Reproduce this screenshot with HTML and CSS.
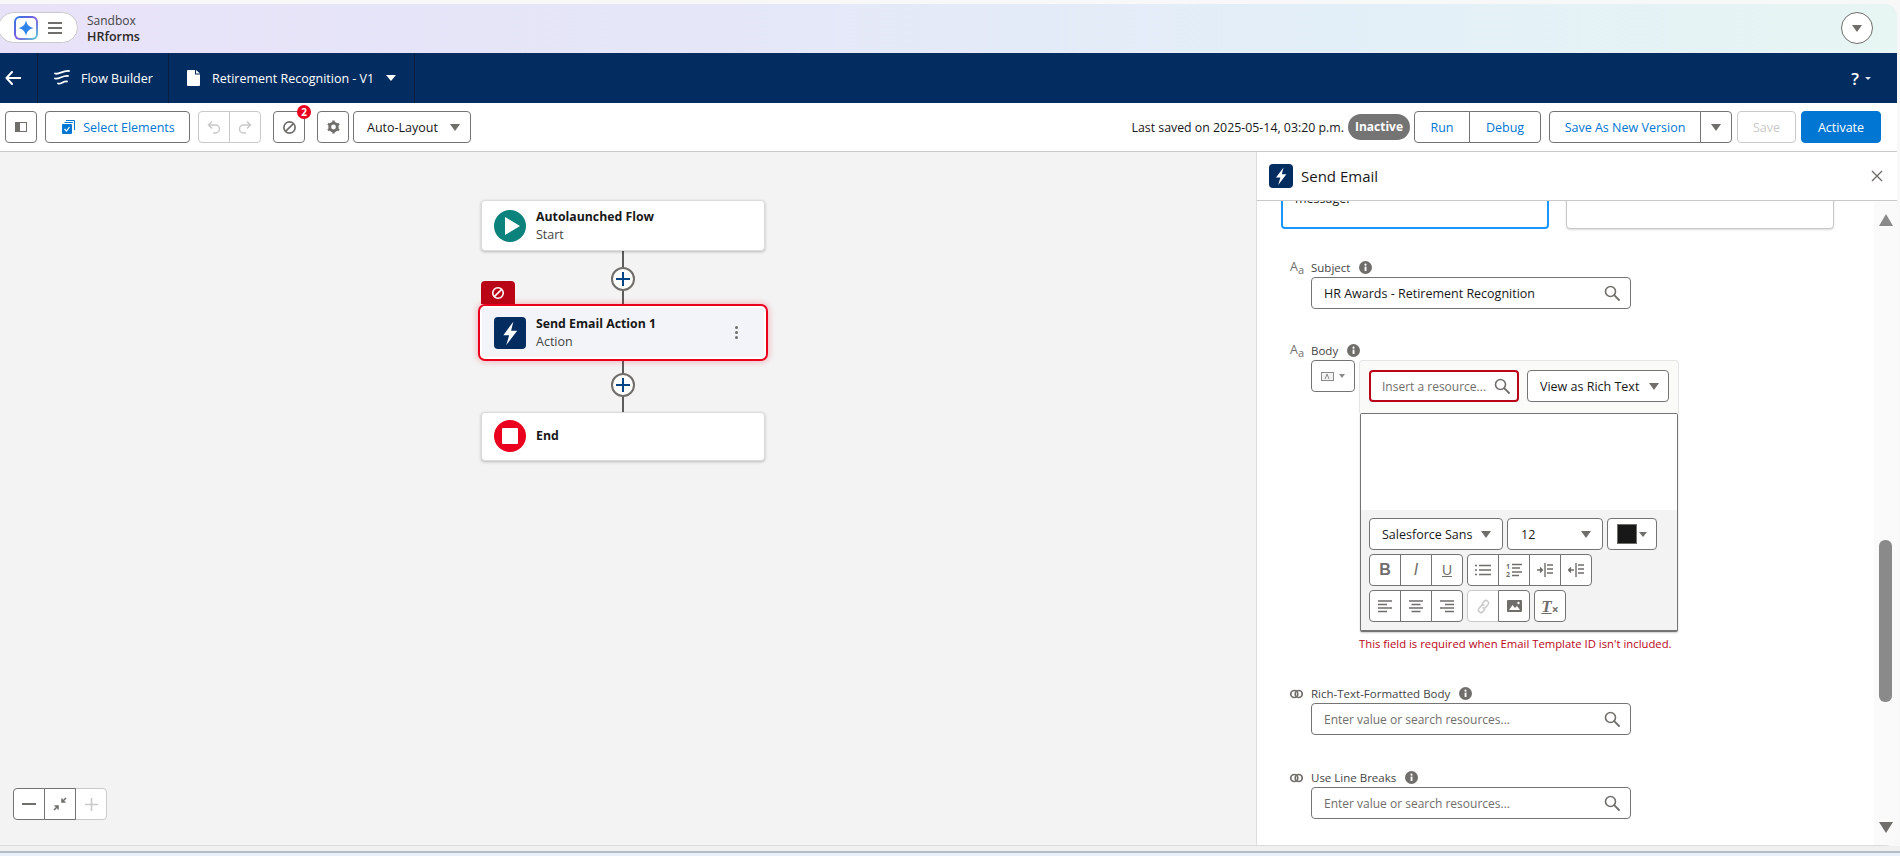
FILE: index.html
```html
<!DOCTYPE html>
<html lang="en">
<head>
    <meta charset="UTF-8">
    <title>Flow Builder - Retirement Recognition</title>
    <link rel="stylesheet" href="styles.css">
</head>
<body>

<svg class="defs" width="0" height="0">
    <symbol id="search" viewBox="0 0 16 16">
        <circle cx="6.5" cy="6.5" r="5" fill="none" stroke="currentColor" stroke-width="1.6"/>
        <path d="M10.2 10.2 15 15" stroke="currentColor" stroke-width="1.8" stroke-linecap="round"/>
    </symbol>
    <symbol id="info" viewBox="0 0 13 13">
        <circle cx="6.5" cy="6.5" r="6.5" fill="#706e6b"/>
        <rect x="5.6" y="5.6" width="1.9" height="4.4" fill="#fff"/>
        <circle cx="6.5" cy="3.7" r="1.1" fill="#fff"/>
    </symbol>
    <symbol id="bolt" viewBox="0 0 24 24">
        <path d="M14.5 3.5 7 13.6h4.4L9.2 21 17.4 10.3h-4.6z" fill="#fff"/>
    </symbol>
    <symbol id="block" viewBox="0 0 16 16">
        <circle cx="8" cy="8" r="6" fill="none" stroke="currentColor" stroke-width="1.8"/>
        <path d="M3.8 12.2 12.2 3.8" stroke="currentColor" stroke-width="1.8"/>
    </symbol>
    <symbol id="link-rings" viewBox="0 0 13 10">
        <circle cx="4.3" cy="5" r="3.5" fill="none" stroke="#706e6b" stroke-width="1.7"/>
        <circle cx="8.7" cy="5" r="3.5" fill="none" stroke="#706e6b" stroke-width="1.7"/>
    </symbol>
    <symbol id="cross" viewBox="0 0 14 14">
        <path d="M7 0v14M0 7h14" stroke="#014486" stroke-width="2"/>
    </symbol>
</svg>

<div class="app">
    <header class="top-bar">
        <div class="app-pill">
            <span class="app-logo">
                <svg width="18" height="18" viewBox="0 0 16 16"><path d="M8 1c.8 4 2.600 6 7 7-4.400 1-6.200 3-7 7-.8-4-2.600-6-7-7 4.400-1 6.200-3 7-7z" fill="#2e84e8"/></svg>
            </span>
            <span class="burger"><i></i><i></i><i></i></span>
        </div>
        <div class="org">
            <div class="org-type">Sandbox</div>
            <div class="org-name">HRforms</div>
        </div>
        <div class="round-btn"><span class="caret"></span></div>
    </header>

    <nav class="nav-bar">
        <div class="nav-back">
            <svg width="16" height="14" viewBox="0 0 16 14"><path d="M7 1 1.500 7 7 13M2 7h13.500" fill="none" stroke="#fff" stroke-width="2" stroke-linecap="round" stroke-linejoin="round"/></svg>
        </div>
        <div class="nav-item nav-builder">
            <svg width="16" height="16" viewBox="0 0 16 16"><path d="M1 3.500C5 5 8 .5 15 1M1 8.500C5 9.500 8 5.500 14 6M4 13.500C7 14.500 9 11 13 11.500" fill="none" stroke="#fff" stroke-width="1.800" stroke-linecap="round"/></svg>
            <span>Flow Builder</span>
        </div>
        <div class="nav-item nav-doc">
            <svg width="13" height="16" viewBox="0 0 13 16"><path d="M1 0h7v4.500h5V15a1 1 0 0 1-1 1H1a1 1 0 0 1-1-1V1a1 1 0 0 1 1-1zM9 0l4 3.500H9z" fill="#fff"/></svg>
            <span>Retirement Recognition - V1</span>
            <span class="caret caret-white"></span>
        </div>
        <div class="nav-help"><span class="help-mark">?</span><span class="caret caret-small"></span></div>
    </nav>

    <div class="toolbar">
        <button class="btn btn-icon">
            <svg width="12" height="10" viewBox="0 0 12 10"><rect x=".5" y=".5" width="11" height="9" fill="#fff" stroke="#706e6b"/><rect x="1" y="1" width="4" height="8" fill="#706e6b"/></svg>
        </button>
        <button class="btn btn-select">
            <svg width="13" height="14" viewBox="0 0 13 14"><path d="M4 .5h8.500V10" fill="none" stroke="#0176d3" stroke-width="1"/><path d="M2.500 2.500H10.500V3" fill="none" stroke="#0176d3" stroke-width="1"/><rect y="4" width="10" height="10" rx="1" fill="#0176d3"/><path d="M2.500 9l2 2 3-4" fill="none" stroke="#fff" stroke-width="1.200"/></svg>
            Select Elements
        </button>
        <div class="btn-group">
            <button class="btn btn-icon btn-off">
                <svg width="14" height="14" viewBox="0 0 14 14"><path d="M5 1.500 1.500 5 5 8.500M2 5h6.500a4 4 0 0 1 0 8H6" fill="none" stroke="#c9c9c9" stroke-width="1.500"/></svg>
            </button>
            <button class="btn btn-icon btn-off">
                <svg width="14" height="14" viewBox="0 0 14 14"><path d="M9 1.500 12.500 5 9 8.500M12 5H5.500a4 4 0 0 0 0 8H8" fill="none" stroke="#c9c9c9" stroke-width="1.500"/></svg>
            </button>
        </div>
        <div class="errors-btn">
            <button class="btn btn-icon"><svg class="icon-grey" width="15" height="15"><use href="#block"/></svg></button>
            <span class="badge">2</span>
        </div>
        <button class="btn btn-icon btn-gear">
            <svg width="13" height="14" viewBox="0 0 13 14"><circle cx="6.500" cy="7" r="3.800" fill="none" stroke="#706e6b" stroke-width="2.800"/><path d="M6.500.5v2M6.500 11.500v2M.9 3.800l1.700 1M10.400 9.200l1.700 1M.9 10.200l1.700-1M10.400 4.800l1.700-1" stroke="#706e6b" stroke-width="2.400"/></svg>
        </button>
        <button class="btn btn-layout"><span>Auto-Layout</span><span class="caret"></span></button>

        <div class="toolbar-right">
            <span class="saved">Last saved on 2025-05-14, 03:20 p.m.</span>
            <span class="status-pill">Inactive</span>
            <div class="btn-group">
                <button class="btn btn-run">Run</button>
                <button class="btn btn-debug">Debug</button>
            </div>
            <div class="btn-group">
                <button class="btn btn-version">Save As New Version</button>
                <button class="btn btn-more"><span class="caret"></span></button>
            </div>
            <button class="btn btn-save btn-off">Save</button>
            <button class="btn btn-activate">Activate</button>
        </div>
    </div>

    <div class="main">
        <section class="canvas">
            <div class="flow">
                <div class="node node-start-card">
                    <span class="node-icon node-start">
                        <svg width="16" height="18" viewBox="0 0 16 18"><path d="M1 0 16 9 1 18z" fill="#fff"/></svg>
                    </span>
                    <div>
                        <div class="node-title">Autolaunched Flow</div>
                        <div class="node-sub">Start</div>
                    </div>
                </div>
                <div class="connector"><span class="plus"><svg width="14" height="14"><use href="#cross"/></svg></span></div>
                <div class="node node-error">
                    <span class="error-tab"><svg width="14" height="14"><use href="#block"/></svg></span>
                    <span class="node-icon node-action"><svg width="32" height="32"><use href="#bolt"/></svg></span>
                    <div>
                        <div class="node-title">Send Email Action 1</div>
                        <div class="node-sub">Action</div>
                    </div>
                    <span class="kebab"><i></i><i></i><i></i></span>
                </div>
                <div class="connector connector-short"><span class="plus"><svg width="14" height="14"><use href="#cross"/></svg></span></div>
                <div class="node node-end-card">
                    <span class="node-icon node-end"><i></i></span>
                    <div class="node-title">End</div>
                </div>
            </div>

            <div class="zoom-bar btn-group">
                <button class="btn btn-icon"><svg width="14" height="2" viewBox="0 0 14 2"><rect width="14" height="2" fill="#706e6b"/></svg></button>
                <button class="btn btn-icon">
                    <svg width="14" height="14" viewBox="0 0 14 14"><path d="M13 1 9 5M9 1.500V5h3.500M1 13l4-4M5 12.500V9H1.500" fill="none" stroke="#706e6b" stroke-width="1.600"/></svg>
                </button>
                <button class="btn btn-icon btn-off"><svg width="13" height="13" viewBox="0 0 13 13"><path d="M6.500 0v13M0 6.500h13" stroke="#c9c9c9" stroke-width="1.600"/></svg></button>
            </div>
        </section>

        <aside class="panel">
            <div class="panel-head">
                <span class="panel-icon"><svg width="24" height="24"><use href="#bolt"/></svg></span>
                <h2>Send Email</h2>
                <svg class="panel-close" width="12" height="12" viewBox="0 0 12 12"><path d="M1 1l10 10M11 1 1 11" stroke="#706e6b" stroke-width="1.400"/></svg>
            </div>
            <div class="panel-body">
                <div class="form">
                    <div class="text-areas">
                        <div class="text-box text-box-focus">message.</div>
                        <div class="text-box"></div>
                    </div>

                    <div class="field field-subject">
                        <span class="type-icon">A<sub>a</sub></span>
                        <div>
                            <div class="field-label">Subject <svg class="info" width="13" height="13"><use href="#info"/></svg></div>
                            <div class="lookup">
                                <span>HR Awards - Retirement Recognition</span>
                                <svg width="16" height="16"><use href="#search"/></svg>
                            </div>
                        </div>
                    </div>

                    <div class="field field-body">
                        <span class="type-icon">A<sub>a</sub></span>
                        <div>
                            <div class="field-label">Body <svg class="info" width="13" height="13"><use href="#info"/></svg></div>
                            <div class="body-row">
                                <button class="btn btn-type">
                                    <svg width="13" height="9" viewBox="0 0 13 9"><rect x=".5" y=".5" width="12" height="8" fill="#f3f3f3" stroke="#8a8a8a"/><path d="M4 7l2-5 2 5" fill="none" stroke="#8a8a8a"/></svg>
                                    <span class="caret caret-tiny"></span>
                                </button>
                                <div class="editor">
                                    <div class="editor-top">
                                        <div class="lookup lookup-error">
                                            <span class="placeholder">Insert a resource...</span>
                                            <svg width="16" height="16"><use href="#search"/></svg>
                                        </div>
                                        <button class="btn btn-view"><span>View as Rich Text</span><span class="caret"></span></button>
                                    </div>
                                    <div class="editor-box">
                                        <div class="editor-text"></div>
                                        <div class="editor-tools">
                                            <div class="tool-row">
                                                <button class="btn btn-font"><span>Salesforce Sans</span><span class="caret"></span></button>
                                                <button class="btn btn-size"><span>12</span><span class="caret"></span></button>
                                                <button class="btn btn-color"><i class="swatch"></i><span class="caret"></span></button>
                                            </div>
                                            <div class="tool-row">
                                                <div class="btn-group">
                                                    <button class="btn btn-tool"><b class="glyph">B</b></button>
                                                    <button class="btn btn-tool"><i class="glyph">I</i></button>
                                                    <button class="btn btn-tool"><u class="glyph glyph-u">U</u></button>
                                                </div>
                                                <div class="btn-group">
                                                    <button class="btn btn-tool">
                                                        <svg width="16" height="12" viewBox="0 0 16 12"><path d="M4 1.500h12M4 6h12M4 10.500h12M0 1.500h2M0 6h2M0 10.500h2" stroke="#706e6b" stroke-width="1.500"/></svg>
                                                    </button>
                                                    <button class="btn btn-tool">
                                                        <svg width="16" height="14" viewBox="0 0 16 14"><text class="mini-num" x="0" y="6">1</text><text class="mini-num" x="0" y="13.500">2</text><path d="M6 1.500h10M6 5h8M6 9h10M6 12.500h7" stroke="#706e6b" stroke-width="1.400"/></svg>
                                                    </button>
                                                    <button class="btn btn-tool">
                                                        <svg width="16" height="14" viewBox="0 0 16 14"><path d="M0 7h4M3 4.500 5.500 7 3 9.500" fill="#706e6b" stroke="#706e6b" stroke-width="1.300"/><path d="M8 0v14M10 2h6M10 6h6M10 10h6" stroke="#706e6b" stroke-width="1.400"/></svg>
                                                    </button>
                                                    <button class="btn btn-tool">
                                                        <svg width="16" height="14" viewBox="0 0 16 14"><path d="M6 7H2M3 4.500.5 7 3 9.500" fill="#706e6b" stroke="#706e6b" stroke-width="1.300"/><path d="M8 0v14M10 2h6M10 6h6M10 10h6" stroke="#706e6b" stroke-width="1.400"/></svg>
                                                    </button>
                                                </div>
                                            </div>
                                            <div class="tool-row">
                                                <div class="btn-group">
                                                    <button class="btn btn-tool">
                                                        <svg width="14" height="13" viewBox="0 0 14 13"><path d="M0 1h14M0 4.500h9M0 8h14M0 11.500h9" stroke="#706e6b" stroke-width="1.500"/></svg>
                                                    </button>
                                                    <button class="btn btn-tool">
                                                        <svg width="14" height="13" viewBox="0 0 14 13"><path d="M0 1h14M2.500 4.500h9M0 8h14M2.500 11.500h9" stroke="#706e6b" stroke-width="1.500"/></svg>
                                                    </button>
                                                    <button class="btn btn-tool">
                                                        <svg width="14" height="13" viewBox="0 0 14 13"><path d="M0 1h14M5 4.500h9M0 8h14M5 11.500h9" stroke="#706e6b" stroke-width="1.500"/></svg>
                                                    </button>
                                                </div>
                                                <div class="btn-group">
                                                    <button class="btn btn-tool btn-off">
                                                        <svg width="15" height="15" viewBox="0 0 15 15"><g fill="none" stroke="#c9c9c9" stroke-width="1.500"><path d="M6 5l2-2.500a2.500 2.500 0 0 1 4 3L10 8a2.500 2.500 0 0 1-3.500.5"/><path d="M9 10l-2 2.500a2.500 2.500 0 0 1-4-3L5 7a2.500 2.500 0 0 1 3.500-.5"/></g></svg>
                                                    </button>
                                                    <button class="btn btn-tool">
                                                        <svg width="15" height="12" viewBox="0 0 15 12"><rect width="15" height="12" rx="1" fill="#706e6b"/><path d="M2 10l3.500-5 2.500 3 2-2 3 4z" fill="#fff"/><circle cx="11.500" cy="3" r="1.200" fill="#fff"/></svg>
                                                    </button>
                                                </div>
                                                <button class="btn btn-tool btn-clear"><span class="glyph-clear">T</span><span class="glyph-x">×</span></button>
                                            </div>
                                        </div>
                                    </div>
                                </div>
                            </div>
                            <div class="field-error">This field is required when Email Template ID isn't included.</div>
                        </div>
                    </div>

                    <div class="field">
                        <svg class="rings" width="13" height="10"><use href="#link-rings"/></svg>
                        <div>
                            <div class="field-label">Rich-Text-Formatted Body <svg class="info" width="13" height="13"><use href="#info"/></svg></div>
                            <div class="lookup">
                                <span class="placeholder">Enter value or search resources...</span>
                                <svg width="16" height="16"><use href="#search"/></svg>
                            </div>
                        </div>
                    </div>

                    <div class="field">
                        <svg class="rings" width="13" height="10"><use href="#link-rings"/></svg>
                        <div>
                            <div class="field-label">Use Line Breaks <svg class="info" width="13" height="13"><use href="#info"/></svg></div>
                            <div class="lookup">
                                <span class="placeholder">Enter value or search resources...</span>
                                <svg width="16" height="16"><use href="#search"/></svg>
                            </div>
                        </div>
                    </div>
                </div>

                <div class="scroll-track">
                    <span class="scroll-up"></span>
                    <span class="scroll-thumb"></span>
                    <span class="scroll-down"></span>
                </div>
            </div>
        </aside>
    </div>
</div>

<div class="page-foot"></div>

</body>
</html>
```

FILE: styles.css
```css
* {
    box-sizing: border-box;
}
html, body {
    height: 100%;
}
body {
    margin: 0;
    overflow: hidden;
    padding-top: 4px;
    background-color: #f8f8f8;
    color: #181818;
    font-family: "Open Sans", "Liberation Sans", sans-serif;
    font-size: 12.5px;
}
.defs {
    display: block;
    height: 0;
}
.app {
    width: 1897px;
    height: 842px;
    border-radius: 0 12px 12px 0;
    overflow: hidden;
    background-color: #f3f3f3;
}
.caret {
    display: inline-block;
    width: 0;
    height: 0;
    border-left: 5.5px solid transparent;
    border-right: 5.5px solid transparent;
    border-top: 7px solid #706e6b;
}
.caret-white {
    border-left-width: 5px;
    border-right-width: 5px;
    border-top: 6px solid #fff;
}
.caret-small {
    border-left-width: 3px;
    border-right-width: 3px;
    border-top: 3.5px solid #dfe5ee;
}
.caret-tiny {
    border-left-width: 3px;
    border-right-width: 3px;
    border-top: 4px solid #8a8a8a;
}

/* top bar */
.top-bar {
    height: 49px;
    display: flex;
    align-items: center;
    background: linear-gradient(90deg, #e8e2f8 0%, #e5e6f8 35%, #e3eff8 70%, #e7f5f3 100%);
}
.app-pill {
    width: 80px;
    height: 31px;
    margin-top: -2px;
    margin-left: -2px;
    padding-left: 15px;
    display: flex;
    align-items: center;
    gap: 10px;
    background-color: #fff;
    border: 1px solid #c9c9c9;
    border-radius: 16px;
}
.app-logo {
    width: 24px;
    height: 24px;
    display: flex;
    align-items: center;
    justify-content: center;
    background: linear-gradient(#fff, #fff) padding-box, linear-gradient(135deg, #2a7be4 0%, #7d5be0 50%, #5fd0d8 100%) border-box;
    border: 2px solid transparent;
    border-radius: 6px;
}
.burger {
    width: 14px;
    display: flex;
    flex-direction: column;
    gap: 3px;
}
.burger i {
    display: block;
    height: 2px;
    background-color: #706e6b;
}
.org {
    margin-left: 9px;
    line-height: 16px;
}
.org-type {
    font-size: 12px;
    color: #444;
}
.org-name {
    font-size: 12.5px;
    font-weight: 600;
    color: #2b2826;
}
.round-btn {
    width: 32px;
    height: 32px;
    margin-left: auto;
    margin-right: 24px;
    margin-top: -1px;
    display: flex;
    align-items: center;
    justify-content: center;
    background-color: #fff;
    border: 1px solid #706e6b;
    border-radius: 50%;
}

/* nav */
.nav-bar {
    height: 50px;
    display: flex;
    align-items: center;
    background-color: #032d60;
    color: #fff;
}
.nav-back {
    width: 38px;
    height: 100%;
    padding-left: 5px;
    display: flex;
    align-items: center;
    border-right: 1px solid #0a1f3d;
}
.nav-item {
    height: 100%;
    display: flex;
    align-items: center;
    border-right: 1px solid #0a1f3d;
}
.nav-builder {
    width: 131px;
    padding-left: 16px;
    gap: 11px;
}
.nav-doc {
    width: 246px;
    padding-left: 18px;
    gap: 12px;
}
.nav-help {
    margin-left: auto;
    margin-right: 26px;
    display: flex;
    align-items: center;
    gap: 6px;
}
.help-mark {
    font-size: 17px;
    font-weight: 600;
}

/* buttons */
.btn {
    position: relative;
    z-index: 1;
    height: 32px;
    padding: 0;
    display: inline-flex;
    align-items: center;
    justify-content: center;
    font: inherit;
    color: #0176d3;
    background-color: #fff;
    border: 1px solid #747474;
    border-radius: 4px;
}
.btn-off {
    z-index: 0;
    color: #c9c9c9;
    border-color: #c9c9c9;
}
.btn-icon {
    width: 32px;
}
.btn-group {
    display: flex;
}
.btn-group .btn + .btn {
    margin-left: -1px;
}
.btn-group .btn:not(:last-child) {
    border-top-right-radius: 0;
    border-bottom-right-radius: 0;
}
.btn-group .btn:not(:first-child) {
    border-top-left-radius: 0;
    border-bottom-left-radius: 0;
}

/* toolbar */
.toolbar {
    height: 49px;
    padding: 8px 16px 0 5px;
    display: flex;
    align-items: flex-start;
    background-color: #fff;
    border-bottom: 1px solid #c9c9c9;
}
.btn-select {
    width: 145px;
    margin: 0 8px;
    padding-left: 2px;
    gap: 8px;
}
.errors-btn {
    position: relative;
    margin-left: 12px;
}
.icon-grey {
    color: #706e6b;
}
.badge {
    position: absolute;
    top: -6px;
    right: -6px;
    z-index: 2;
    width: 14px;
    height: 14px;
    font-size: 10px;
    font-weight: 700;
    line-height: 14px;
    text-align: center;
    color: #fff;
    background-color: #ea001e;
    border-radius: 50%;
}
.btn-gear {
    margin: 0 4px 0 12px;
}
.btn-layout {
    width: 118px;
    padding: 0 10px 0 13px;
    justify-content: space-between;
    color: #181818;
}
.toolbar-right {
    margin-left: auto;
    display: flex;
    align-items: center;
    gap: 4px;
}
.saved {
    font-size: 12.35px;
    white-space: nowrap;
}
.status-pill {
    width: 62px;
    height: 26px;
    font-weight: 700;
    font-size: 12px;
    line-height: 26px;
    text-align: center;
    color: #fff;
    background-color: #747474;
    border-radius: 13px;
}
.btn-run {
    width: 56px;
}
.btn-debug {
    width: 72px;
}
.toolbar-right .btn-group + .btn-group {
    margin-left: 4px;
}
.btn-version {
    width: 152px;
}
.btn-more {
    width: 32px;
}
.btn-save {
    width: 59px;
    margin-left: 1px;
}
.btn-activate {
    width: 80px;
    margin-left: 1px;
    color: #fff;
    background-color: #0176d3;
    border-color: #0176d3;
}

/* canvas */
.main {
    height: 694px;
    display: flex;
    border-bottom: 1px solid #dcdcdc;
}
.canvas {
    position: relative;
    width: 1256px;
    padding: 48px 0 0 481px;
}
.flow {
    width: 284px;
    display: flex;
    flex-direction: column;
}
.node {
    position: relative;
    z-index: 1;
    height: 51px;
    padding-left: 12px;
    display: flex;
    align-items: center;
    gap: 10px;
    background-color: #fff;
    border: 1px solid #dcdcdc;
    border-radius: 4px;
    box-shadow: 0 1px 3px rgba(0, 0, 0, 0.25);
}
.node-start-card {
    padding-top: 1px;
}
.node-end-card {
    height: 49px;
    padding-bottom: 1px;
}
.node-error {
    padding-left: 13px;
    background-color: #f3f4f9;
    border: 0;
    box-shadow: inset 0 0 0 1px #fff, 0 0 0 1px #fff, 0 0 0 3px #ea001e, 0 0 6px 4px rgba(234, 0, 30, 0.25);
}
.node-icon {
    flex: none;
    width: 32px;
    height: 32px;
    display: flex;
    align-items: center;
    justify-content: center;
}
.node-start {
    background-color: #0b827c;
    border-radius: 50%;
    padding-left: 3px;
}
.node-action {
    background-color: #032d60;
    border-radius: 4px;
}
.node-end {
    background-color: #ea001e;
    border-radius: 50%;
}
.node-end i {
    width: 16px;
    height: 16px;
    background-color: #fff;
    border-radius: 1px;
}
.node-title {
    font-size: 12.3px;
    font-weight: 700;
    line-height: 18px;
}
.node-sub {
    font-size: 12.5px;
    line-height: 18px;
    color: #444;
}
.error-tab {
    position: absolute;
    top: -26px;
    left: 0;
    width: 34px;
    height: 23px;
    display: flex;
    align-items: center;
    justify-content: center;
    color: #fff;
    background-color: #ba0517;
    border-radius: 4px 4px 0 0;
}
.kebab {
    margin-left: auto;
    margin-right: 27px;
    display: flex;
    flex-direction: column;
    gap: 2px;
}
.kebab i {
    width: 3px;
    height: 3px;
    background-color: #706e6b;
    border-radius: 50%;
}
.connector {
    height: 56px;
    display: flex;
    align-items: center;
    justify-content: center;
    background: linear-gradient(#5c5c5c, #5c5c5c) center / 2px 100% no-repeat;
}
.connector-short {
    height: 54px;
}
.plus {
    width: 24px;
    height: 24px;
    display: flex;
    align-items: center;
    justify-content: center;
    background-color: #fff;
    border: 2px solid #706e6b;
    border-radius: 50%;
}
.zoom-bar {
    position: absolute;
    left: 13px;
    bottom: 25px;
}

/* panel */
.panel {
    flex: 1;
    min-width: 0;
    display: flex;
    flex-direction: column;
    background-color: #fff;
    border-left: 1px solid #dcdcdc;
}
.panel-head {
    position: relative;
    z-index: 2;
    flex: none;
    height: 49px;
    padding-left: 12px;
    display: flex;
    align-items: center;
    gap: 8px;
    background-color: #fff;
    border-bottom: 1px solid #c9c9c9;
}
.panel-icon {
    width: 24px;
    height: 24px;
    background-color: #032d60;
    border-radius: 4px;
}
.panel-head h2 {
    margin: 0;
    font-size: 15px;
    font-weight: 400;
}
.panel-close {
    margin-left: auto;
    margin-right: 14px;
}
.panel-body {
    flex: 1;
    min-height: 0;
    display: flex;
    overflow: hidden;
}
.form {
    flex: 1;
    min-width: 0;
    padding-left: 24px;
}
.text-areas {
    height: 28px;
    display: flex;
    align-items: flex-end;
    gap: 17px;
}
.text-box {
    flex: none;
    width: 268px;
    height: 60px;
    padding: 19px 12px 0;
    background-color: #fff;
    border: 1px solid #c9c9c9;
    border-radius: 4px;
    box-shadow: 0 1px 2px rgba(0, 0, 0, 0.15);
}
.text-box-focus {
    border: 2px solid #1b96ff;
    box-shadow: none;
}
.field {
    margin-top: 34px;
    margin-left: 9px;
    display: grid;
    grid-template-columns: 21px auto;
    justify-content: start;
}
.field-subject {
    margin-top: 30px;
}
.field-body {
    margin-top: 33px;
}
.type-icon {
    font-size: 12.5px;
    line-height: 16px;
    color: #706e6b;
}
.type-icon sub {
    font-size: 11px;
    vertical-align: -3px;
    line-height: 0;
}
.rings {
    margin-top: 4px;
}
.field-label {
    height: 18px;
    padding-bottom: 2px;
    display: flex;
    align-items: center;
    gap: 9px;
    font-size: 11.5px;
    color: #444;
}
.lookup {
    width: 320px;
    height: 32px;
    padding: 0 10px 0 12px;
    display: flex;
    align-items: center;
    justify-content: space-between;
    background-color: #fff;
    border: 1px solid #747474;
    border-radius: 4px;
}
.lookup svg {
    flex: none;
    color: #706e6b;
}
.placeholder {
    font-size: 12px;
    color: #706e6b;
}
.body-row {
    display: flex;
    align-items: flex-start;
    gap: 4px;
}
.btn-type {
    width: 44px;
    gap: 5px;
}
.editor {
    width: 320px;
}
.editor-top {
    height: 53px;
    padding: 9px 9px 0 9px;
    display: flex;
    gap: 8px;
    background-color: #fafaf9;
    border: 1px solid #e5e5e5;
    border-bottom: 0;
    border-radius: 4px 4px 0 0;
}
.lookup-error {
    width: 151px;
    padding: 0 7px 0 11px;
    border: 2px solid #ba0517;
}
.btn-view {
    width: 143px;
    padding: 0 9px 0 12px;
    justify-content: space-between;
    color: #181818;
}
.editor-box {
    margin: 0 1px;
    border: 1px solid #747474;
    border-bottom-width: 2px;
    border-radius: 2px;
    box-shadow: 0 1px 2px rgba(0, 0, 0, 0.2);
}
.editor-text {
    height: 96px;
    background-color: #fff;
}
.editor-tools {
    height: 120px;
    padding: 8px 8px 0 8px;
    display: flex;
    flex-direction: column;
    gap: 4px;
    background-color: #f3f3f3;
}
.tool-row {
    display: flex;
    gap: 4px;
}
.btn-font {
    width: 134px;
    padding: 0 11px 0 12px;
    justify-content: space-between;
    color: #181818;
}
.btn-size {
    width: 96px;
    padding: 0 11px 0 13px;
    justify-content: space-between;
    color: #181818;
}
.btn-color {
    width: 50px;
    gap: 2px;
}
.btn-color .caret {
    border-left-width: 4px;
    border-right-width: 4px;
    border-top-width: 5px;
}
.swatch {
    width: 20px;
    height: 20px;
    background-color: #181818;
    border: 1px solid #706e6b;
}
.btn-tool {
    width: 32px;
    color: #706e6b;
}
.btn-clear {
    gap: 0;
}
.glyph {
    font-size: 16px;
    line-height: 1;
    font-family: "Liberation Sans", sans-serif;
}
.glyph-u {
    font-size: 14px;
}
.glyph-clear {
    font-family: "Liberation Serif", serif;
    font-size: 17px;
    font-weight: 700;
    font-style: italic;
    text-decoration: underline;
    line-height: 1;
}
.glyph-x {
    font-size: 12px;
    font-weight: 700;
    line-height: 1;
    align-self: flex-end;
    margin-bottom: 5px;
}
.mini-num {
    font-size: 7px;
    font-weight: 700;
    fill: #706e6b;
}
.field-error {
    height: 17px;
    margin: 3px 0 -1px 48px;
    padding-top: 1px;
    font-size: 11.3px;
    line-height: 16px;
    color: #ba0517;
}

/* scrollbar */
.scroll-track {
    flex: none;
    width: 23px;
    display: flex;
    flex-direction: column;
    align-items: center;
    background-color: #fafafa;
}
.scroll-up {
    margin-top: 13px;
    width: 0;
    height: 0;
    border-left: 7.500px solid transparent;
    border-right: 7.500px solid transparent;
    border-bottom: 12px solid #8a8a8a;
}
.scroll-thumb {
    margin-top: 314px;
    width: 13px;
    height: 162px;
    background-color: #8a8a8a;
    border-radius: 6px;
}
.scroll-down {
    margin-top: 120px;
    width: 0;
    height: 0;
    border-left: 7.500px solid transparent;
    border-right: 7.500px solid transparent;
    border-top: 11px solid #706e6b;
}

.page-foot {
    height: 10px;
    background: linear-gradient(#f0f0f0 0, #f0f0f0 5px, #b4bac2 5px, #b4bac2 7px, #e8f0fa 7px);
}
```
